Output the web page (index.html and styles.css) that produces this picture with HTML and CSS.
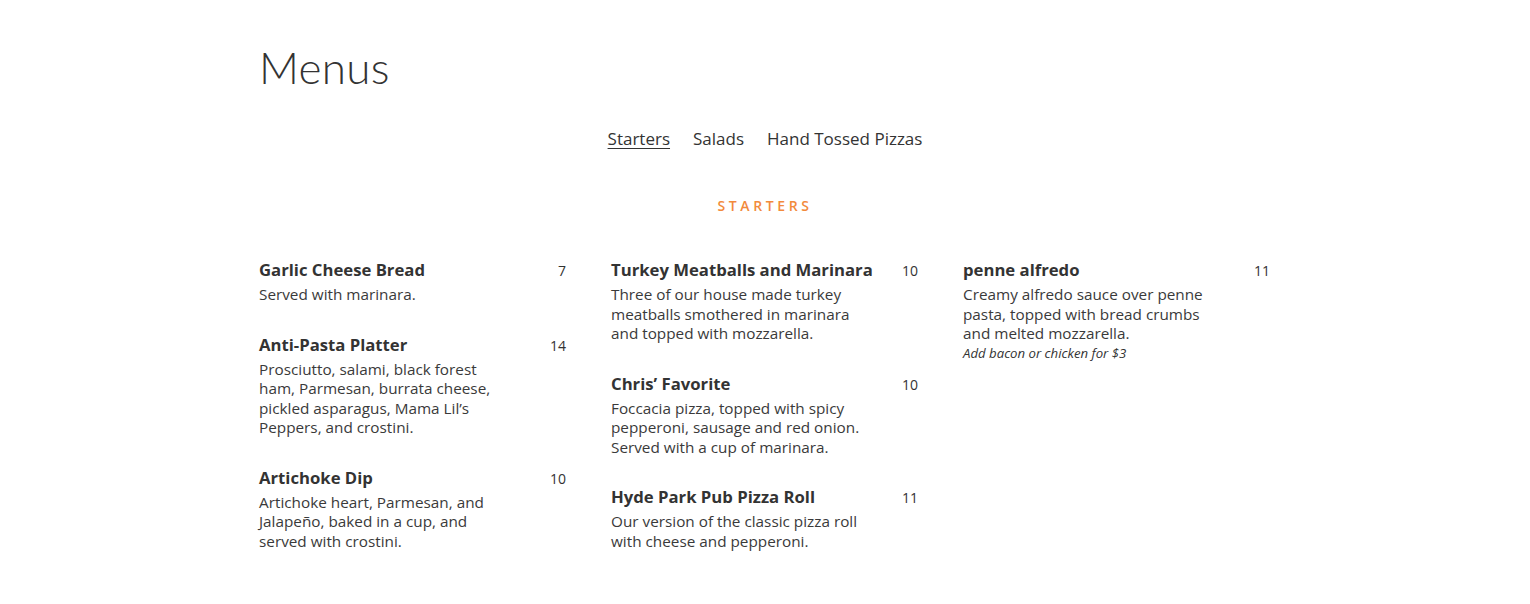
FILE: index.html
```html
<!DOCTYPE html>
<html lang="en">
<head>
<meta charset="utf-8">
<title>Menus</title>
<link rel="stylesheet" href="styles.css">
</head>
<body>
<main class="page">
  <h1 class="page-title">Menus</h1>
  <nav class="menu-nav">
    <a class="menu-nav__link menu-nav__link--active" href="#">Starters</a>
    <a class="menu-nav__link" href="#">Salads</a>
    <a class="menu-nav__link" href="#">Hand Tossed Pizzas</a>
  </nav>
  <h2 class="section-title">Starters</h2>
  <div class="menu-grid">
    <div class="menu-col">
      <div class="item">
        <div class="item__head"><span class="item__name">Garlic Cheese Bread</span><span class="item__price">7</span></div>
        <p class="item__desc">Served with marinara.</p>
      </div>
      <div class="item">
        <div class="item__head"><span class="item__name">Anti-Pasta Platter</span><span class="item__price">14</span></div>
        <p class="item__desc">Prosciutto, salami, black forest ham, Parmesan, burrata cheese, pickled asparagus, Mama Lil’s Peppers, and crostini.</p>
      </div>
      <div class="item">
        <div class="item__head"><span class="item__name">Artichoke Dip</span><span class="item__price">10</span></div>
        <p class="item__desc">Artichoke heart, Parmesan, and Jalapeño, baked in a cup, and served with crostini.</p>
      </div>
    </div>
    <div class="menu-col">
      <div class="item">
        <div class="item__head"><span class="item__name">Turkey Meatballs and Marinara</span><span class="item__price">10</span></div>
        <p class="item__desc">Three of our house made turkey meatballs smothered in marinara and topped with mozzarella.</p>
      </div>
      <div class="item">
        <div class="item__head"><span class="item__name">Chris’ Favorite</span><span class="item__price">10</span></div>
        <p class="item__desc">Foccacia pizza, topped with spicy pepperoni, sausage and red onion. Served with a cup of marinara.</p>
      </div>
      <div class="item">
        <div class="item__head"><span class="item__name">Hyde Park Pub Pizza Roll</span><span class="item__price">11</span></div>
        <p class="item__desc">Our version of the classic pizza roll with cheese and pepperoni.</p>
      </div>
    </div>
    <div class="menu-col">
      <div class="item">
        <div class="item__head"><span class="item__name">penne alfredo</span><span class="item__price">11</span></div>
        <p class="item__desc">Creamy alfredo sauce over penne pasta, topped with bread crumbs and melted mozzarella.</p>
        <p class="item__note">Add bacon or chicken for $3</p>
      </div>
    </div>
  </div>
</main>
</body>
</html>
```
FILE: styles.css
```css
* { box-sizing: border-box; }
html, body { margin: 0; padding: 0; background: #fff; }
body {
  font-family: "Open Sans", "Lato", sans-serif;
  color: #333;
}
.page {
  width: 1012px;
  margin: 0 auto;
  padding-top: 42px;
}
.page-title {
  margin: 0;
  font-family: "Lato", "Open Sans", sans-serif;
  font-weight: 300;
  font-size: 44px;
  line-height: 50px;
  color: #333;
  letter-spacing: 0.3px;
}
.menu-nav {
  display: flex;
  justify-content: center;
  gap: 23px;
  margin-top: 35px;
}
.menu-nav__link {
  font-size: 17px;
  line-height: 24px;
  color: #333;
  text-decoration: none;
}
.menu-nav__link--active { text-decoration: underline; text-underline-offset: 3px; text-decoration-thickness: 1px; }
.section-title {
  margin: 45px 0 0;
  text-align: center;
  font-size: 14px;
  line-height: 20px;
  font-weight: 600;
  letter-spacing: 3.6px;
  text-transform: uppercase;
  color: #f28a3c;
}
.menu-grid {
  display: grid;
  grid-template-columns: repeat(3, 307px);
  column-gap: 45px;
  margin-top: 43px;
}
.item { margin-bottom: 29px; }
.item__head {
  display: flex;
  justify-content: space-between;
  align-items: baseline;
}
.item__name {
  font-size: 16.7px;
  line-height: 22px;
  font-weight: 700;
  color: #333;
}
.item__price {
  font-size: 14px;
  color: #333;
}
.item__desc {
  margin: 4px 0 0;
  width: 250px;
  font-size: 15.3px;
  line-height: 19.5px;
  color: #3a3a3a;
}
.item__note {
  margin: 0;
  font-size: 13.2px;
  line-height: 19px;
  font-style: italic;
  color: #333;
}
```
